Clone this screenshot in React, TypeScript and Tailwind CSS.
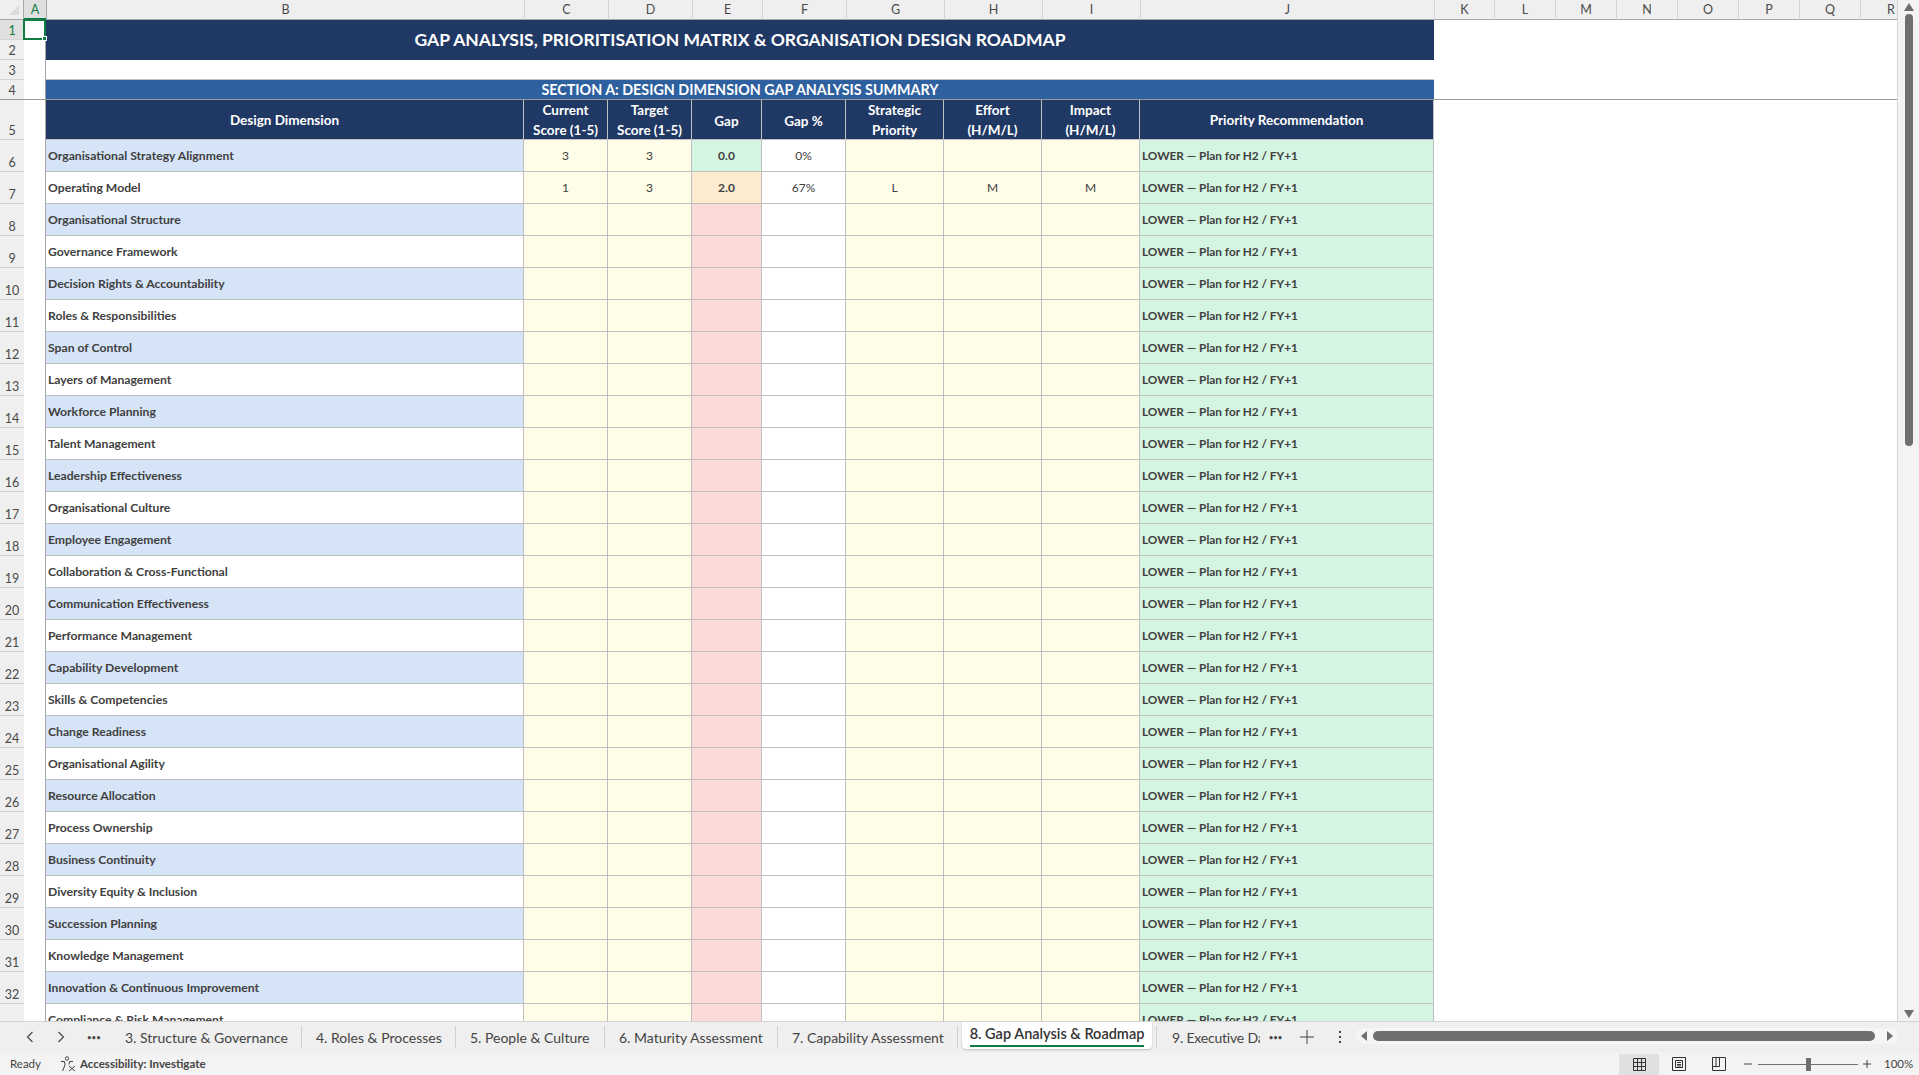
import { Fragment } from 'react'

const FONT = "font-['Lato','Liberation_Sans',sans-serif]"

const topCols = ['C', 'D', 'E', 'F', 'G', 'H', 'I', 'J', 'K', 'L', 'M', 'N', 'O', 'P', 'Q', 'R']

const dimensions = [
  'Organisational Strategy Alignment',
  'Operating Model',
  'Organisational Structure',
  'Governance Framework',
  'Decision Rights & Accountability',
  'Roles & Responsibilities',
  'Span of Control',
  'Layers of Management',
  'Workforce Planning',
  'Talent Management',
  'Leadership Effectiveness',
  'Organisational Culture',
  'Employee Engagement',
  'Collaboration & Cross-Functional',
  'Communication Effectiveness',
  'Performance Management',
  'Capability Development',
  'Skills & Competencies',
  'Change Readiness',
  'Organisational Agility',
  'Resource Allocation',
  'Process Ownership',
  'Business Continuity',
  'Diversity Equity & Inclusion',
  'Succession Planning',
  'Knowledge Management',
  'Innovation & Continuous Improvement',
  'Compliance & Risk Management',
]

const headers = [
  ['Current', 'Score (1-5)'],
  ['Target', 'Score (1-5)'],
  ['Gap'],
  ['Gap %'],
  ['Strategic', 'Priority'],
  ['Effort', '(H/M/L)'],
  ['Impact', '(H/M/L)'],
]

const filled: Record<number, string[]> = {
  0: ['3', '3', '0.0', '0%', '', '', ''],
  1: ['1', '3', '2.0', '67%', 'L', 'M', 'M'],
}

const tabs = [
  { label: '3. Structure & Governance', w: 'w-[191px]' },
  { label: '4. Roles & Processes', w: 'w-[154px]' },
  { label: '5. People & Culture', w: 'w-[149px]' },
  { label: '6. Maturity Assessment', w: 'w-[173px]' },
  { label: '7. Capability Assessment', w: 'w-[180px]' },
]

function RowHead({ n, active }: { n: number; active?: boolean }) {
  return (
    <div
      className={`flex items-end justify-center border-b border-[#d4d4d4] text-[12.5px] leading-[17px] ${
        active ? 'bg-[#e0e0e0] text-[#107c41]' : 'bg-[#efefef] text-[#4a4a4a]'
      }`}
    >
      {n}
    </div>
  )
}

function Sheet() {
  return (
    <div className="h-[1021px] flex-1 overflow-hidden bg-white">
      <div className="grid grid-cols-[24px_22px_478px_84px_84px_70px_84px_98px_98px_98px_294px_60px_61px_61px_61px_61px_61px_61px_61px] grid-rows-[20px_20px_20px_20px_20px_40px] auto-rows-[32px]">
        {/* column letters */}
        <div className="flex items-center justify-end border-b border-r border-[#a8a8a8] bg-[#efefef] pr-[3px]">
          <svg width="12" height="12" viewBox="0 0 12 12">
            <path d="M11 1 L11 11 L1 11 Z" fill="#dcdcdc" />
          </svg>
        </div>
        <div className="flex items-center justify-center border-b-2 border-[#107c41] bg-[#e0e0e0] pt-[2px] text-[12.5px] text-[#107c41]">A</div>
        <div className="flex items-center justify-center border-b border-l border-[#a8a8a8] bg-[#efefef] pt-[2px] text-[12.5px] text-[#4a4a4a]">B</div>
        {topCols.map((c) => (
          <div key={c} className="flex items-center justify-center border-b border-l border-[#d4d4d4] border-b-[#a8a8a8] bg-[#efefef] pt-[2px] text-[12.5px] text-[#4a4a4a]">
            {c}
          </div>
        ))}

        {/* rows 1-2 title */}
        <RowHead n={1} active />
        <div className="relative border-r border-[#a8a8a8]">
          <div className="absolute -left-px -top-px bottom-0 -right-px border-2 border-[#107c41]">
            <div className="absolute -bottom-[3px] -right-[3px] size-[5px] border border-white bg-[#107c41]" />
          </div>
        </div>
        <div className="col-span-9 row-span-2 flex items-center justify-center bg-[#1f3864] text-[17.5px] font-bold text-white">
          GAP ANALYSIS, PRIORITISATION MATRIX &amp; ORGANISATION DESIGN ROADMAP
        </div>
        <div className="col-span-8 row-span-2" />
        <RowHead n={2} />
        <div className="border-r border-[#a8a8a8]" />

        {/* row 3 */}
        <RowHead n={3} />
        <div className="border-r border-[#a8a8a8]" />
        <div className="col-span-9 border-b border-[#bfbfbf]" />
        <div className="col-span-8" />

        {/* row 4 section bar, freeze line underneath */}
        <div className="flex items-end justify-center border-b border-[#9a9a9a] bg-[#efefef] text-[12.5px] leading-[17px] text-[#4a4a4a]">4</div>
        <div className="border-b border-r border-[#9a9a9a]" />
        <div className="col-span-9 flex items-center justify-center border-b border-[#9a9a9a] bg-[#2e5f9e] text-[14.3px] font-bold text-white">
          SECTION A: DESIGN DIMENSION GAP ANALYSIS SUMMARY
        </div>
        <div className="col-span-8 border-b border-[#9a9a9a]" />

        {/* row 5 table head */}
        <RowHead n={5} />
        <div className="border-r border-[#a8a8a8]" />
        <div className="flex items-center justify-center border-b border-r border-[#bfbfbf] bg-[#1f3864] pt-[2px] text-[13.5px] font-bold text-white">
          Design Dimension
        </div>
        {headers.map((lines) => (
          <div
            key={lines[0]}
            className={`flex flex-col items-center justify-center border-b border-r border-[#bfbfbf] bg-[#1f3864] text-[13.5px] leading-[20px] font-bold whitespace-nowrap text-white ${
              lines.length === 1 ? 'pt-[2px]' : ''
            }`}
          >
            {lines.map((l) => (
              <span key={l}>{l}</span>
            ))}
          </div>
        ))}
        <div className="flex items-center justify-center border-b border-r border-[#bfbfbf] bg-[#1f3864] pt-[2px] text-[13.5px] font-bold text-white">
          Priority Recommendation
        </div>
        <div className="col-span-8" />

        {/* data rows */}
        {dimensions.map((name, i) => {
          const vals = filled[i] ?? ['', '', '', '', '', '', '']
          const gapBg = i === 0 ? 'bg-[#d5f5e3]' : i === 1 ? 'bg-[#fdebd0]' : 'bg-[#fadbd8]'
          return (
            <Fragment key={name}>
              <RowHead n={i + 6} />
              <div className="border-r border-[#a8a8a8]" />
              <div className={`flex items-center border-b border-r border-[#bfbfbf] pl-[2px] pt-[2px] text-[12.2px] font-bold text-[#404040] ${i % 2 === 0 ? 'bg-[#d6e4f7]' : 'bg-white'}`}>
                {name}
              </div>
              {vals.map((v, c) => (
                <div
                  key={c}
                  className={`flex items-center justify-center border-b border-r border-[#bfbfbf] pt-[1px] text-[12px] text-[#404040] ${
                    c === 2 ? `${gapBg} font-bold` : c === 3 ? 'bg-white' : 'bg-[#fffde7]'
                  }`}
                >
                  {v}
                </div>
              ))}
              <div className="flex items-center border-b border-r border-[#bfbfbf] bg-[#d5f5e3] pl-[2px] text-[11.8px] font-bold text-[#404040]">
                LOWER — Plan for H2 / FY+1
              </div>
              <div className="col-span-8" />
            </Fragment>
          )
        })}
      </div>
    </div>
  )
}

function VerticalScrollbar() {
  return (
    <div className="flex h-[1021px] w-[22px] flex-col items-center border-l border-[#d4d4d4] bg-[#f3f3f3] pt-[3px]">
      <svg width="10" height="8" viewBox="0 0 10 8">
        <path d="M5 0 L10 8 L0 8 Z" fill="#6f6f6f" />
      </svg>
      <div className="mt-[3px] h-[432px] w-[8px] rounded-full bg-[#6f6f6f]" />
      <div className="flex-1" />
      <svg width="10" height="8" viewBox="0 0 10 8" className="mb-[3px]">
        <path d="M5 8 L10 0 L0 0 Z" fill="#6f6f6f" />
      </svg>
    </div>
  )
}

function TabBar() {
  return (
    <div className="flex h-[32px] items-center border-t border-[#d4d4d4] bg-[#efefef] pb-[1px] text-[14px] text-[#444]">
      <div className="flex w-[111px] items-center justify-between pl-[26px] pr-[10px]">
        <svg width="8" height="12" viewBox="0 0 8 12" fill="none" stroke="#444" strokeWidth="1.1">
          <path d="M6.5 1 L1.5 6 L6.5 11" />
        </svg>
        <svg width="8" height="12" viewBox="0 0 8 12" fill="none" stroke="#444" strokeWidth="1.1">
          <path d="M1.5 1 L6.5 6 L1.5 11" />
        </svg>
        <span className="text-[7px] font-bold leading-none tracking-[0.5px]">•••</span>
      </div>
      {tabs.map((t) => (
        <div key={t.label} className={`flex shrink-0 items-center justify-between ${t.w}`}>
          <span className="whitespace-nowrap pl-[14px]">{t.label}</span>
          <div className="h-[22px] w-px bg-[#d0d0d0]" />
        </div>
      ))}
      <div className="ml-[4px] mr-[4px] flex h-[27px] w-[190px] shrink-0 flex-col items-center self-start rounded-b-[4px] bg-white pt-[3px] shadow-[0_1px_2px_rgba(0,0,0,0.2)]">
        <span className="whitespace-nowrap border-b-[2px] border-[#107c41] pb-[2px] text-[14.5px] leading-[18px] font-semibold text-[#333]">
          8. Gap Analysis &amp; Roadmap
        </span>
      </div>
      <div className="h-[22px] w-px bg-[#d0d0d0]" />
      <div className="ml-[15px] w-[88px] overflow-hidden whitespace-nowrap tracking-[-0.2px]">9. Executive Dashboard</div>
      <span className="ml-[9px] text-[7px] font-bold leading-none tracking-[0.5px]">•••</span>
      <svg width="14" height="14" viewBox="0 0 14 14" className="ml-[17px]" stroke="#444" strokeWidth="1">
        <path d="M7 0 V14 M0 7 H14" />
      </svg>
      <svg width="4" height="14" viewBox="0 0 4 14" className="ml-[24px]" fill="#444">
        <rect x="1" y="1" width="2" height="2" />
        <rect x="1" y="6" width="2" height="2" />
        <rect x="1" y="11" width="2" height="2" />
      </svg>
      <div className="ml-[14px] mb-[2px] mr-[21px] flex h-[16px] flex-1 items-center rounded-full bg-[#f5f5f5] px-[5px]">
        <svg width="6" height="10" viewBox="0 0 6 10">
          <path d="M0 5 L6 0 V10 Z" fill="#6f6f6f" />
        </svg>
        <div className="ml-[6px] h-[10px] flex-1 rounded-full bg-[#6f6f6f]" />
        <svg width="6" height="10" viewBox="0 0 6 10" className="ml-[12px]">
          <path d="M6 5 L0 0 V10 Z" fill="#6f6f6f" />
        </svg>
      </div>
    </div>
  )
}

function StatusBar() {
  return (
    <div className="flex h-[22px] items-center bg-[#f3f3f3] text-[11.5px] text-[#444]">
      <span className="ml-[10px]">Ready</span>
      <svg width="16" height="16" viewBox="0 0 16 16" className="ml-[19px]" fill="none" stroke="#444" strokeWidth="1">
        <circle cx="7" cy="2.5" r="1.7" />
        <path d="M1 5.5 L4.5 5.5 L5 9 L2.5 15 M13 5.5 L9.5 5.5 L9 8.5" />
        <path d="M9 10 L15 15 M15 10 L9 15" />
      </svg>
      <span className="ml-[4px] font-bold">Accessibility: Investigate</span>
      <div className="flex-1" />
      <div className="flex h-[21px] w-[40px] items-center justify-center self-end bg-[#e0e0e0]">
        <svg width="13" height="13" viewBox="0 0 13 13" fill="none" stroke="#333" strokeWidth="1">
          <path d="M.5 .5 H12.5 V12.5 H.5 Z M4.5 .5 V12.5 M8.5 .5 V12.5 M.5 4.5 H12.5 M.5 8.5 H12.5" />
        </svg>
      </div>
      <div className="flex w-[40px] justify-center">
        <svg width="14" height="14" viewBox="0 0 14 14" fill="none" stroke="#333" strokeWidth="1">
          <path d="M.5 .5 H13.5 V13.5 H.5 Z M3.5 3.5 H10.5 V10.5 H3.5 Z M5 5.5 H9 M5 7.5 H9 M5 9 H9" />
        </svg>
      </div>
      <div className="flex w-[40px] justify-center">
        <svg width="14" height="14" viewBox="0 0 14 14" fill="none" stroke="#333" strokeWidth="1">
          <path d="M.5 .5 H13.5 V13.5 H.5 Z M.5 9.5 H7.5 V.5 M4 .5 V9.5" />
        </svg>
      </div>
      <svg width="8" height="2" viewBox="0 0 8 2" className="ml-[5px]" fill="#444">
        <rect width="8" height="1" y="0.5" />
      </svg>
      <div className="relative ml-[6px] h-px w-[100px] bg-[#6f6f6f]">
        <div className="absolute left-[48px] top-[-6px] h-[13px] w-[5px] bg-[#6f6f6f]" />
      </div>
      <svg width="8" height="8" viewBox="0 0 8 8" className="ml-[5px]" stroke="#444" strokeWidth="1">
        <path d="M4 0 V8 M0 4 H8" />
      </svg>
      <span className="ml-[13px] mr-[8px] w-[27px] text-[11.5px] text-[#444]">100%</span>
    </div>
  )
}

export default function App() {
  return (
    <div className={`flex h-[1075px] w-[1919px] flex-col overflow-hidden bg-white ${FONT}`}>
      <div className="flex">
        <Sheet />
        <VerticalScrollbar />
      </div>
      <TabBar />
      <StatusBar />
    </div>
  )
}
